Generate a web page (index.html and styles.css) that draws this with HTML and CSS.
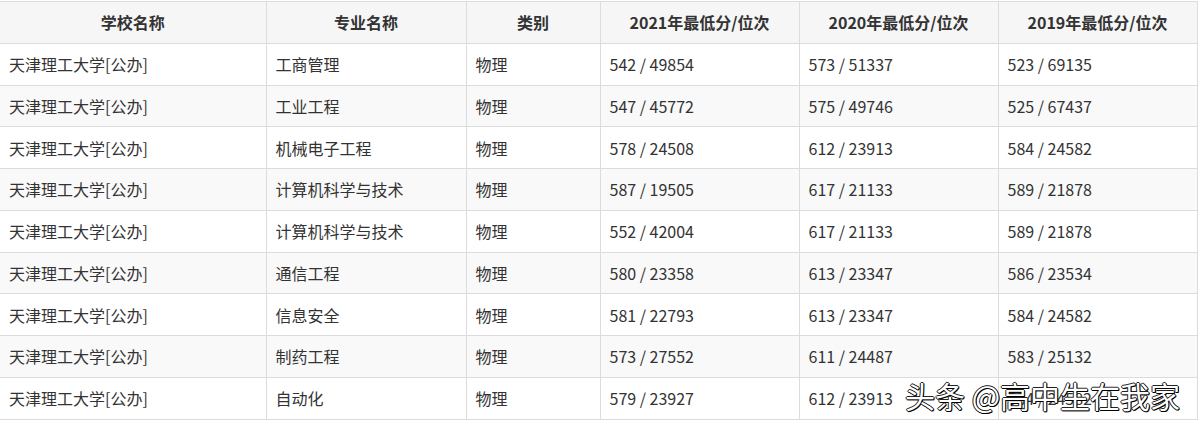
FILE: index.html
```html
<!DOCTYPE html>
<html lang="zh-CN">
<head>
<meta charset="utf-8">
<title>天津理工大学 录取分数</title>
<link rel="stylesheet" href="styles.css">
</head>
<body>
<div class="wrap">
<table class="score-table">
  <colgroup>
    <col class="c-school"><col class="c-major"><col class="c-type"><col class="c-year"><col class="c-year"><col class="c-year">
  </colgroup>
  <thead>
    <tr><th>学校名称</th><th>专业名称</th><th>类别</th><th>2021年最低分/位次</th><th>2020年最低分/位次</th><th>2019年最低分/位次</th></tr>
  </thead>
  <tbody>
    <tr><td>天津理工大学[公办]</td><td>工商管理</td><td>物理</td><td>542 / 49854</td><td>573 / 51337</td><td>523 / 69135</td></tr>
    <tr><td>天津理工大学[公办]</td><td>工业工程</td><td>物理</td><td>547 / 45772</td><td>575 / 49746</td><td>525 / 67437</td></tr>
    <tr><td>天津理工大学[公办]</td><td>机械电子工程</td><td>物理</td><td>578 / 24508</td><td>612 / 23913</td><td>584 / 24582</td></tr>
    <tr><td>天津理工大学[公办]</td><td>计算机科学与技术</td><td>物理</td><td>587 / 19505</td><td>617 / 21133</td><td>589 / 21878</td></tr>
    <tr><td>天津理工大学[公办]</td><td>计算机科学与技术</td><td>物理</td><td>552 / 42004</td><td>617 / 21133</td><td>589 / 21878</td></tr>
    <tr><td>天津理工大学[公办]</td><td>通信工程</td><td>物理</td><td>580 / 23358</td><td>613 / 23347</td><td>586 / 23534</td></tr>
    <tr><td>天津理工大学[公办]</td><td>信息安全</td><td>物理</td><td>581 / 22793</td><td>613 / 23347</td><td>584 / 24582</td></tr>
    <tr><td>天津理工大学[公办]</td><td>制药工程</td><td>物理</td><td>573 / 27552</td><td>611 / 24487</td><td>583 / 25132</td></tr>
    <tr><td>天津理工大学[公办]</td><td>自动化</td><td>物理</td><td>579 / 23927</td><td>612 / 23913</td><td>584 / 24582</td></tr>
  </tbody>
</table>
<div class="watermark">头条 @高中生在我家</div>
</div>
</body>
</html>
```
FILE: styles.css
```css
html, body {
  margin: 0;
  padding: 0;
  background: #fff;
  overflow: hidden;
}
.wrap {
  position: relative;
  width: 1200px;
  height: 421px;
  padding-top: 1px;
  box-sizing: border-box;
}
.score-table {
  border-collapse: collapse;
  table-layout: fixed;
  width: 1197px;
  font-family: "Noto Sans CJK SC", "Noto Sans", sans-serif;
  font-size: 16px;
  color: #333;
}
.c-school { width: 266px; }
.c-major { width: 200px; }
.c-type { width: 134px; }
.c-year { width: 199px; }
.score-table th,
.score-table td {
  height: 41.75px;
  padding: 0 9px;
  border: 1px solid #dcdcdc;
  box-sizing: border-box;
  white-space: nowrap;
  line-height: 20px;
}
.score-table tr > :first-child {
  border-left: none;
}
.score-table th {
  background: #f6f6f6;
  font-weight: bold;
  text-align: center;
  color: #333;
}
.score-table td {
  text-align: left;
}
.score-table tbody tr:nth-child(even) td {
  background: #f9f9f9;
}
.watermark {
  position: absolute;
  left: 905px;
  top: 375px;
  font-family: "Noto Sans CJK SC", sans-serif;
  font-size: 30px;
  line-height: 40px;
  color: #fff;
  text-shadow: 1px 1px 0 #000, 0 1px 0 #000, 1px 0 0 #000, -1px 0 0 #222, 0 -1px 0 #222;
  white-space: nowrap;
}
```
